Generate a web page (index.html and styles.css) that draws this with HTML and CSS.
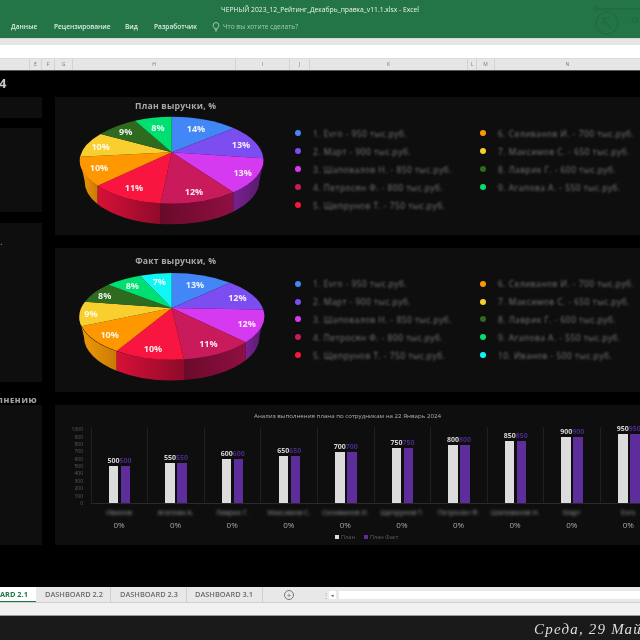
FILE: index.html
```html
<!DOCTYPE html>
<html lang="ru">
<head>
<meta charset="utf-8">
<title>Рейтинг</title>
<link rel="stylesheet" href="styles.css">
</head>
<body>
<header class="titlebar">
  <div class="doc-title">ЧЕРНЫЙ 2023_12_Рейтинг_Декабрь_правка_v11.1.xlsx - Excel</div>
  <nav class="ribbon-tabs">
    <span class="rt rt-1">Данные</span>
    <span class="rt rt-2">Рецензирование</span>
    <span class="rt rt-3">Вид</span>
    <span class="rt rt-4">Разработчик</span>
    <svg class="bulb" viewBox="0 0 10 12"><path d="M3.4 8.2C3.2 6.8 1.4 6.2 1.4 4A3.6 3.6 0 0 1 8.6 4C8.6 6.2 6.8 6.8 6.6 8.2ZM3.6 9.6H6.4M4 11H6" fill="none" stroke="#cfe3d6" stroke-width=".9"/></svg>
    <span class="tell">Что вы хотите сделать?</span>
  </nav>
  <svg class="watermark" viewBox="0 0 64 38"><g fill="none" stroke="#1f6d42" stroke-width="1.5"><path d="M20 9H64"/><circle cx="20" cy="9" r="2"/><circle cx="31" cy="23" r="11"/><path d="M35 29L27 19M27 25V18H34"/><circle cx="59" cy="20" r="2.5"/></g></svg>
</header>
<div class="ribbon-foot"></div>
<div class="formula"></div>
<div class="col-heads">
  <span class="ch c1"></span><span class="ch c2">E</span><span class="ch c3">F</span><span class="ch c4">G</span><span class="ch c5">H</span><span class="ch c6">I</span><span class="ch c7">J</span><span class="ch c8">K</span><span class="ch c9">L</span><span class="ch c10">M</span><span class="ch c11">N</span>
</div>
<main class="sheet">
  <aside class="left">
    <div class="sheet-title">4</div>
    <div class="lp lp-a"></div>
    <div class="lp lp-b"></div>
    <div class="lp lp-c"><span class="dot-note">.</span></div>
    <div class="lp-head">ЛНЕНИЮ</div>
    <div class="lp lp-d"></div>
  </aside>
  <section class="right">
    <article class="panel p1">
      <svg class="pie" viewBox="0 6 690 414">
        <text class="pie-title" x="347" y="42">План выручки, %</text>
        <defs>
          <linearGradient id="gO"><stop offset="0" stop-color="#f09a08"/><stop offset="1" stop-color="#c97a05"/></linearGradient>
          <linearGradient id="gR"><stop offset="0" stop-color="#d81038"/><stop offset="1" stop-color="#8f0a2a"/></linearGradient>
          <linearGradient id="gC"><stop offset="0" stop-color="#6a0a2a"/><stop offset="1" stop-color="#8f0f42"/></linearGradient>
          <linearGradient id="gM"><stop offset="0" stop-color="#7a2090"/><stop offset="1" stop-color="#541a6c"/></linearGradient>
        </defs>
        <path fill="url(#gO)" d="M60 195A276 130 0 0 0 113 272L113 328A262 130 0 0 1 74 258Z"/>
        <path fill="url(#gR)" d="M113 272A276 130 0 0 0 302 325L302 387A262 130 0 0 1 113 328Z"/>
        <path fill="url(#gC)" d="M302 325A276 130 0 0 0 520 292L520 350A262 130 0 0 1 302 387Z"/>
        <path fill="url(#gM)" d="M520 292A276 130 0 0 0 612 195L598 258A262 130 0 0 1 520 350Z"/>
        <path fill="#4287f5" d="M335 172L335 65A276 130 0 0 1 522 100Z"/>
        <path fill="#7c4df0" d="M335 172L522 100A276 130 0 0 1 610 190Z"/>
        <path fill="#d63af0" d="M335 172L610 190A276 130 0 0 1 520 292Z"/>
        <path fill="#c91a5c" d="M335 172L520 292A276 130 0 0 1 302 325Z"/>
        <path fill="#f8153f" d="M335 172L302 325A276 130 0 0 1 113 272Z"/>
        <path fill="#ff9800" d="M335 172L113 272A276 130 0 0 1 60 185Z"/>
        <path fill="#f9cf30" d="M335 172L60 185A276 130 0 0 1 122 117Z"/>
        <path fill="#2f6b1f" d="M335 172L122 117A276 130 0 0 1 225 77Z"/>
        <path fill="#00e070" d="M335 172L225 77A276 130 0 0 1 335 65Z"/>
        <g class="pie-labels">
          <text x="408" y="112">14%</text><text x="543" y="158">13%</text><text x="548" y="242">13%</text><text x="402" y="300">12%</text><text x="222" y="288">11%</text><text x="117" y="229">10%</text><text x="122" y="165">10%</text><text x="197" y="120">9%</text><text x="294" y="108">8%</text>
        </g>
      </svg>
      <ul class="legend">
        <li><i class="dot blue"></i><span>1. Evro - 950 тыс.руб.</span></li>
        <li><i class="dot purple"></i><span>2. Март - 900 тыс.руб.</span></li>
        <li><i class="dot magenta"></i><span>3. Шаповалов Н. - 850 тыс.руб.</span></li>
        <li><i class="dot crimson"></i><span>4. Петросян Ф. - 800 тыс.руб.</span></li>
        <li><i class="dot red"></i><span>5. Щепрунов Т. - 750 тыс.руб.</span></li>
        <li><i class="dot orange"></i><span>6. Селиванов И. - 700 тыс.руб.</span></li>
        <li><i class="dot yellow"></i><span>7. Максимов С. - 650 тыс.руб.</span></li>
        <li><i class="dot dkgreen"></i><span>8. Лаврик Г. - 600 тыс.руб.</span></li>
        <li><i class="dot emerald"></i><span>9. Агапова А. - 550 тыс.руб.</span></li>
      </ul>
    </article>
    <article class="panel p2">
      <svg class="pie" viewBox="0 0 690 420">
        <text class="pie-title" x="347" y="48">Факт выручки, %</text>
        <path fill="#f4c528" d="M58 205A277 130 0 0 0 65 237L72 267Z"/>
        <path fill="url(#gO)" d="M65 237A277 130 0 0 0 170 310L170 368A263 130 0 0 1 72 267Z"/>
        <path fill="url(#gR)" d="M170 310A277 130 0 0 0 372 333L372 396A263 130 0 0 1 170 368Z"/>
        <path fill="url(#gC)" d="M372 333A277 130 0 0 0 557 282L557 337A263 130 0 0 1 372 396Z"/>
        <path fill="url(#gM)" d="M557 282A277 130 0 0 0 612 205L598 267A263 130 0 0 1 557 337Z"/>
        <path fill="#4287f5" d="M335 180L335 75A277 130 0 0 1 510 104Z"/>
        <path fill="#7c4df0" d="M335 180L510 104A277 130 0 0 1 610 185Z"/>
        <path fill="#d63af0" d="M335 180L610 185A277 130 0 0 1 557 283Z"/>
        <path fill="#c91a5c" d="M335 180L557 283A277 130 0 0 1 372 334Z"/>
        <path fill="#f8153f" d="M335 180L372 334A277 130 0 0 1 170 309Z"/>
        <path fill="#ff9800" d="M335 180L170 309A277 130 0 0 1 65 235Z"/>
        <path fill="#f9cf30" d="M335 180L65 235A277 130 0 0 1 75 161Z"/>
        <path fill="#2f6b1f" d="M335 180L75 161A277 130 0 0 1 145 110Z"/>
        <path fill="#00e070" d="M335 180L145 110A277 130 0 0 1 240 83Z"/>
        <path fill="#12f5f5" d="M335 180L240 83A277 130 0 0 1 335 75Z"/>
        <g class="pie-labels">
          <text x="405" y="120">13%</text><text x="532" y="159">12%</text><text x="560" y="236">12%</text><text x="445" y="298">11%</text><text x="279" y="312">10%</text><text x="149" y="269">10%</text><text x="93" y="207">9%</text><text x="134" y="154">8%</text><text x="217" y="123">8%</text><text x="298" y="112">7%</text>
        </g>
      </svg>
      <ul class="legend">
        <li><i class="dot blue"></i><span>1. Evro - 950 тыс.руб.</span></li>
        <li><i class="dot purple"></i><span>2. Март - 900 тыс.руб.</span></li>
        <li><i class="dot magenta"></i><span>3. Шаповалов Н. - 850 тыс.руб.</span></li>
        <li><i class="dot crimson"></i><span>4. Петросян Ф. - 800 тыс.руб.</span></li>
        <li><i class="dot red"></i><span>5. Щепрунов Т. - 750 тыс.руб.</span></li>
        <li><i class="dot orange"></i><span>6. Селиванов И. - 700 тыс.руб.</span></li>
        <li><i class="dot yellow"></i><span>7. Максимов С. - 650 тыс.руб.</span></li>
        <li><i class="dot dkgreen"></i><span>8. Лаврик Г. - 600 тыс.руб.</span></li>
        <li><i class="dot emerald"></i><span>9. Агапова А. - 550 тыс.руб.</span></li>
        <li><i class="dot cyan"></i><span>10. Иванов - 500 тыс.руб.</span></li>
      </ul>
    </article>
    <article class="panel-chart">
      <h2 class="chart-title">Анализ выполнения плана по сотрудникам на 22 Январь 2024</h2>
      <div class="plot-row">
        <div class="axis"><span>1000</span><span>900</span><span>800</span><span>700</span><span>600</span><span>500</span><span>400</span><span>300</span><span>200</span><span>100</span><span>0</span></div>
        <div class="cats">
          <div class="cat"><div class="b"><em>500</em><i class="bar w" style="height:37px"></i></div><div class="b"><em class="pu">500</em><i class="bar v" style="height:37px"></i></div></div>
          <div class="cat"><div class="b"><em>550</em><i class="bar w" style="height:40.5px"></i></div><div class="b"><em class="pu">550</em><i class="bar v" style="height:40.5px"></i></div></div>
          <div class="cat"><div class="b"><em>600</em><i class="bar w" style="height:44px"></i></div><div class="b"><em class="pu">600</em><i class="bar v" style="height:44px"></i></div></div>
          <div class="cat"><div class="b"><em>650</em><i class="bar w" style="height:47.5px"></i></div><div class="b"><em class="pu">650</em><i class="bar v" style="height:47.5px"></i></div></div>
          <div class="cat"><div class="b"><em>700</em><i class="bar w" style="height:51px"></i></div><div class="b"><em class="pu">700</em><i class="bar v" style="height:51px"></i></div></div>
          <div class="cat"><div class="b"><em>750</em><i class="bar w" style="height:55px"></i></div><div class="b"><em class="pu">750</em><i class="bar v" style="height:55px"></i></div></div>
          <div class="cat"><div class="b"><em>800</em><i class="bar w" style="height:58.5px"></i></div><div class="b"><em class="pu">800</em><i class="bar v" style="height:58.5px"></i></div></div>
          <div class="cat"><div class="b"><em>850</em><i class="bar w" style="height:62px"></i></div><div class="b"><em class="pu">850</em><i class="bar v" style="height:62px"></i></div></div>
          <div class="cat"><div class="b"><em>900</em><i class="bar w" style="height:66px"></i></div><div class="b"><em class="pu">900</em><i class="bar v" style="height:66px"></i></div></div>
          <div class="cat"><div class="b"><em>950</em><i class="bar w" style="height:69.5px"></i></div><div class="b"><em class="pu">950</em><i class="bar v" style="height:69.5px"></i></div></div>
        </div>
      </div>
      <div class="names">
        <span>Иванов</span><span>Агапова А.</span><span>Лаврик Г.</span><span>Максимов С.</span><span>Селиванов И.</span><span>Щепрунов Т.</span><span>Петросян Ф.</span><span>Шаповалов Н.</span><span>Март</span><span>Evro</span>
      </div>
      <div class="percents">
        <span>0%</span><span>0%</span><span>0%</span><span>0%</span><span>0%</span><span>0%</span><span>0%</span><span>0%</span><span>0%</span><span>0%</span>
      </div>
      <div class="chart-legend"><i class="sq w"></i><span>План</span><i class="sq v"></i><span>План Факт</span></div>
    </article>
  </section>
</main>
<footer class="foot">
  <div class="tabs">
    <span class="tab active">ARD 2.1</span>
    <span class="tab t2">DASHBOARD 2.2</span>
    <span class="tab t3">DASHBOARD 2.3</span>
    <span class="tab t4">DASHBOARD 3.1</span>
    <span class="add">+</span>
    <span class="grip">⋮</span>
    <span class="arrow">◂</span>
    <span class="track"></span>
  </div>
  <div class="status"></div>
  <div class="desk"><span>Среда, 29 Май</span></div>
</footer>
</body>
</html>
```
FILE: styles.css
```css
* { box-sizing: border-box; }
html, body { margin: 0; padding: 0; }
body { width: 640px; height: 640px; overflow: hidden; background: #000; font-family: "Open Sans", "Liberation Sans", sans-serif; }

.titlebar, .col-heads, .sheet, .foot { filter: blur(.35px); }

.titlebar { height: 38px; background: #237548; color: #eaf3ed; display: flex; flex-direction: column; overflow: hidden; position: relative; }
.doc-title { height: 19px; line-height: 19px; text-align: center; font-size: 6.75px; }
.ribbon-tabs { display: flex; align-items: center; height: 15px; padding-left: 11px; font-size: 6.6px; }
.rt { font-weight: 600; color: #dcebe2; white-space: nowrap; }
.rt-1 { width: 43px; }
.rt-2 { width: 71px; }
.rt-3 { width: 29px; }
.rt-4 { width: 58px; }
.bulb { width: 8px; height: 10px; margin-right: 3px; }
.tell { color: #a5c9b3; white-space: nowrap; }
.watermark { position: absolute; right: 0; top: 0; width: 64px; height: 38px; }

.ribbon-foot { height: 7px; background: #e6e6e6; border-top: 1px solid #d5dcd7; }
.formula { height: 13px; background: #fff; }
.col-heads { height: 13px; background: #e6e6e6; border-bottom: 1px solid #555; border-top: 1px solid #dcdcdc; display: flex; }
.ch { text-align: center; font-size: 5px; line-height: 11px; color: #777; border-right: 1px solid #d2d2d2; }
.c1 { width: 30px; } .c2 { width: 12px; } .c3 { width: 13px; } .c4 { width: 18px; } .c5 { width: 163px; } .c6 { width: 54px; } .c7 { width: 20px; } .c8 { width: 158px; } .c9 { width: 9px; } .c10 { width: 18px; } .c11 { width: 145px; border-right: 0; }

.sheet { height: 516px; display: flex; background: #000; overflow: hidden; }
.left { width: 42px; margin-right: 13px; flex: none; display: flex; flex-direction: column; overflow: hidden; }
.sheet-title { height: 26px; line-height: 25px; font-size: 13px; font-weight: 700; color: #c8c8c8; margin-left: -1px; }
.lp { background: #0e0e0e; }
.lp-a { height: 21px; margin-bottom: 10px; }
.lp-b { height: 84px; margin-bottom: 11px; }
.lp-c { height: 159px; margin-bottom: 10px; padding-top: 13px; font-size: 9px; line-height: 11px; color: #aaa; }
.lp-head { height: 13px; margin-left: -3px; font-size: 7.6px; line-height: 16px; font-weight: 800; letter-spacing: .7px; color: #a0a0a0; white-space: nowrap; }
.lp-d { height: 140px; }

.right { width: 585px; flex: none; padding-top: 26px; display: flex; flex-direction: column; gap: 13px; overflow: hidden; }
.panel { background: #0e0e0e; display: flex; align-items: flex-start; padding-left: 5px; }
.p1 { height: 138px; }
.p2 { height: 144px; }
.pie { width: 230px; flex: none; display: block; }
.p1 .pie { height: 138px; }
.p2 .pie { height: 140px; }
.pie-title { font-size: 26px; font-weight: 700; fill: #a8a8a8; text-anchor: middle; letter-spacing: .6px; }
.pie-labels text { font-size: 27px; font-weight: 700; fill: #fff; fill-opacity: .9; text-anchor: middle; }

.legend { list-style: none; margin: 27px 0 0 5px; padding: 0; display: grid; grid-auto-flow: column; grid-template-rows: repeat(5, 18px); grid-template-columns: 185px 155px; }
.p2 .legend { grid-template-rows: repeat(5, 17.8px); }
.legend li { display: flex; align-items: center; gap: 12px; }
.legend span { font-size: 8.4px; letter-spacing: .5px; color: #7c7c7c; white-space: nowrap; filter: blur(1.3px); }
.dot { width: 6px; height: 6px; border-radius: 50%; flex: none; }
.blue { background: #4287f5; } .purple { background: #7c4df0; } .magenta { background: #d63af0; } .crimson { background: #c91a5c; } .red { background: #f8153f; } .orange { background: #ff9800; } .yellow { background: #f9cf30; } .dkgreen { background: #2f6b1f; } .emerald { background: #00e070; } .cyan { background: #12f5f5; }

.panel-chart { height: 140px; flex: none; background: #0e0e0e; }
.chart-title { margin: 0; height: 22px; line-height: 22px; font-size: 6.15px; font-weight: 400; color: #b0b0b0; text-align: center; }
.plot-row { display: flex; height: 77px; align-items: flex-start; }
.axis { width: 28px; margin-right: 7.7px; height: 81px; margin-top: -.7px; display: flex; flex-direction: column; text-align: right; font-size: 5px; line-height: 7.36px; color: #5e5e5e; flex: none; }
.cats { display: flex; height: 77px; width: 566px; flex: none; border-bottom: 1px solid #2a2a2a; }
.cat { width: 56.6px; flex: none; border-left: 1px solid #202020; display: flex; justify-content: center; align-items: flex-end; gap: 2px; }
.b { width: 10px; display: flex; flex-direction: column; align-items: center; }
.b em { font-style: normal; font-size: 7px; line-height: 10px; font-weight: 700; color: #d4d4d4; letter-spacing: 0; }
.b em.pu { color: #4d2a86; }
.bar { display: block; width: 9.5px; }
.bar.w { background: #dcdcdc; }
.bar.v { background: #5c2d9b; }
.names, .percents { margin-left: 35.7px; display: flex; width: 566px; }
.names span, .percents span { width: 56.6px; flex: none; text-align: center; white-space: nowrap; }
.names { height: 13px; margin-top: 2px; line-height: 13px; font-size: 7px; color: #999; filter: blur(1.4px); }
.percents { height: 11px; line-height: 11px; font-size: 8px; color: #a8a8a8; }
.chart-legend { height: 12px; margin-top: 1px; padding-left: 280px; display: flex; align-items: center; gap: 2px; font-size: 5.6px; color: #5e5e5e; }
.chart-legend span { margin-right: 7px; }
.sq { width: 4px; height: 4px; }
.sq.w { background: #dcdcdc; }
.sq.v { background: #5c2d9b; }

.tabs { height: 16px; background: #e8e8e8; display: flex; align-items: center; border-bottom: 1px solid #cfcfcf; font-size: 7.4px; color: #6a6a6a; overflow: hidden; }
.tab { height: 16px; line-height: 15px; white-space: nowrap; font-weight: 600; }
.tab.active { width: 36px; background: #fff; color: #237548; font-weight: 700; border-bottom: 2px solid #237548; margin-right: 9px; }
.t2 { width: 66px; border-right: 1px solid #cfcfcf; margin-right: 9px; }
.t3 { width: 67px; border-right: 1px solid #cfcfcf; margin-right: 8px; }
.t4 { width: 68px; border-right: 1px solid #cfcfcf; margin-right: 21px; }
.add { width: 10px; height: 10px; border: 1px solid #777; border-radius: 50%; line-height: 8px; text-align: center; font-size: 8px; color: #666; margin-right: 28px; }
.grip { width: 5px; font-size: 8px; color: #aaa; margin-right: 2px; }
.arrow { width: 7px; height: 8px; background: #fff; font-size: 5px; line-height: 8px; text-align: center; color: #555; margin-right: 3px; }
.track { flex: 1; height: 8px; background: #fff; }
.status { height: 13px; background: #f1f1f1; border-bottom: 1px solid #999; }
.desk { height: 24px; background: #1a1a1a; padding-left: 534px; overflow: hidden; white-space: nowrap; }
.desk span { font-family: "Liberation Serif", serif; font-style: italic; font-size: 15px; line-height: 26px; letter-spacing: 1.2px; color: #ddd; }
```
